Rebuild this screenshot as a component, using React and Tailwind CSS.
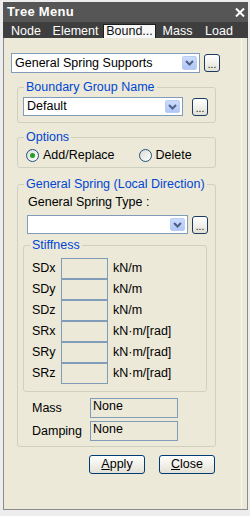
import React from 'react';

const Arrow = () => (
  <span className="absolute right-[2px] top-[2px] bottom-[2px] w-[15px] rounded-[2px] border border-[#b9cdf7] bg-gradient-to-b from-[#cddcfc] to-[#b0c6f6] flex items-center justify-center">
    <svg width="9" height="6" viewBox="0 0 9 6">
      <path d="M1 1 L4.5 4.5 L8 1" stroke="#4d6185" strokeWidth="2" fill="none" />
    </svg>
  </span>
);

const Select = ({ value, className }) => (
  <div className={`relative bg-white border border-[#7f9db9] flex items-center pl-[3px] ${className}`}>
    <span>{value}</span>
    <Arrow />
  </div>
);

const DotsButton = ({ className = '' }) => (
  <button className={`w-[16px] h-[18px] rounded-[3px] border border-[#1c3b63] bg-gradient-to-b from-white to-[#e3e1d5] flex items-end justify-center pb-[2px] text-[10px] leading-[8px] text-black ${className}`}>
    ...
  </button>
);

const Group = ({ title, className = '', children }) => (
  <fieldset className={`border border-[#d0d0bf] rounded-[3px] ${className}`}>
    <legend className="ml-[6px] px-[2px] text-[#0046d5] leading-[14px]">{title}</legend>
    {children}
  </fieldset>
);

const Radio = ({ checked, label, className = '' }) => (
  <label className={`flex items-center h-[14px] ${className}`}>
    <span className="w-[13px] h-[13px] rounded-full border border-[#1c5180] bg-gradient-to-br from-[#dcdcd4] to-white flex items-center justify-center">
      {checked && <span className="w-[5px] h-[5px] rounded-full bg-[#21a121]" />}
    </span>
    <span className="ml-[4px]">{label}</span>
  </label>
);

const stiffness = [
  ['SDx', 'kN/m'],
  ['SDy', 'kN/m'],
  ['SDz', 'kN/m'],
  ['SRx', 'kN·m/[rad]'],
  ['SRy', 'kN·m/[rad]'],
  ['SRz', 'kN·m/[rad]'],
];

const tabs = [
  ['Node', 'w-[44px]'],
  ['Element', 'w-[55px]'],
  ['Bound...', 'w-[53px]'],
  ['Mass', 'w-[43px]'],
  ['Load', 'w-[40px]'],
];

const App = () => {
  return (
    <div className="w-[250px] h-[516px] bg-[#ededed] pl-[3px] pr-[2px] pt-[2px] pb-[6px] flex flex-col font-['Liberation_Sans',Arial,sans-serif] text-[12.5px] text-black">
      {/* Title bar */}
      <div className="h-[20px] bg-[#565656] flex items-center justify-between pl-[4px] pr-[3px] text-white">
        <span className="font-bold text-[13px] tracking-[0.3px]">Tree Menu</span>
        <svg width="10" height="9" viewBox="0 0 10 9">
          <path d="M1 0.5 L9 8.5 M9 0.5 L1 8.5" stroke="white" strokeWidth="2" />
        </svg>
      </div>

      {/* Tabs */}
      <div className="h-[16px] bg-[#3e3e3e] flex items-end pl-px">
        {tabs.map(([name, w]) =>
          name === 'Bound...' ? (
            <div key={name} className={`${w} h-[14px] bg-[#f7f7f7] border border-b-0 border-[#1e1e1e] text-[#111] flex items-center justify-center leading-none`}>
              {name}
            </div>
          ) : (
            <div key={name} className={`${w} h-[14px] text-white flex items-center justify-center leading-none`}>
              {name}
            </div>
          )
        )}
      </div>

      {/* Content */}
      <div className="flex-1 bg-[#ece9d8] border border-t-0 border-[#8c8c8c] flex">
        <div className="w-[238px] border-r border-[#f8f7f0] pt-[15px]">
          <div className="flex items-center ml-[7px]">
            <Select value="General Spring Supports" className="w-[189px] h-[20px]" />
            <DotsButton className="ml-[4px]" />
          </div>

          <Group title="Boundary Group Name" className="ml-[13px] w-[199px] mt-[7px] pt-[3px] pb-[6px]">
            <div className="flex items-center ml-[5px]">
              <Select value="Default" className="w-[160px] h-[19px]" />
              <DotsButton className="ml-[9px]" />
            </div>
          </Group>

          <Group title="Options" className="ml-[13px] w-[199px] mt-[7px] pt-[4px] pb-[5px]">
            <div className="flex items-center">
              <Radio checked label="Add/Replace" className="ml-[8px]" />
              <Radio label="Delete" className="ml-[24px]" />
            </div>
          </Group>

          <Group title="General Spring (Local Direction)" className="ml-[13px] w-[199px] mt-[9px] pt-[4px] pb-[5px]">
            <div className="ml-[10px] leading-[14px]">General Spring Type :</div>
            <div className="flex items-center ml-[9px] mt-[6px]">
              <Select value="" className="w-[161px] h-[19px]" />
              <DotsButton className="ml-[4px]" />
            </div>

            <Group title="Stiffness" className="ml-[5px] w-[184px] mt-[4px] pt-[6px] pb-[7px]">
              {stiffness.map(([label, unit]) => (
                <div key={label} className="flex items-center h-[21px]">
                  <span className="ml-[8px] w-[29px]">{label}</span>
                  <span className="w-[47px] h-[21px] border border-[#7f9db9]" />
                  <span className="ml-[5px]">{unit}</span>
                </div>
              ))}
            </Group>

            <div className="mt-[6px] flex flex-col gap-[3px]">
              <div className="flex items-center h-[20px]">
                <span className="ml-[14px] w-[58px]">Mass</span>
                <span className="w-[88px] h-[20px] border border-[#7f9db9] pl-[2px] leading-[14px]">None</span>
              </div>
              <div className="flex items-center h-[20px]">
                <span className="ml-[14px] w-[58px]">Damping</span>
                <span className="w-[88px] h-[20px] border border-[#7f9db9] pl-[2px] leading-[14px]">None</span>
              </div>
            </div>
          </Group>

          <div className="flex mt-[8px] ml-[85px] gap-[14px]">
            <button className="w-[56px] h-[19px] rounded-[3px] border border-[#003c74] bg-gradient-to-b from-white to-[#e3e1d5] leading-none">
              <span className="underline">A</span>pply
            </button>
            <button className="w-[56px] h-[19px] rounded-[3px] border border-[#003c74] bg-gradient-to-b from-white to-[#e3e1d5] leading-none">
              <span className="underline">C</span>lose
            </button>
          </div>
        </div>
      </div>
    </div>
  );
};

export default App;
